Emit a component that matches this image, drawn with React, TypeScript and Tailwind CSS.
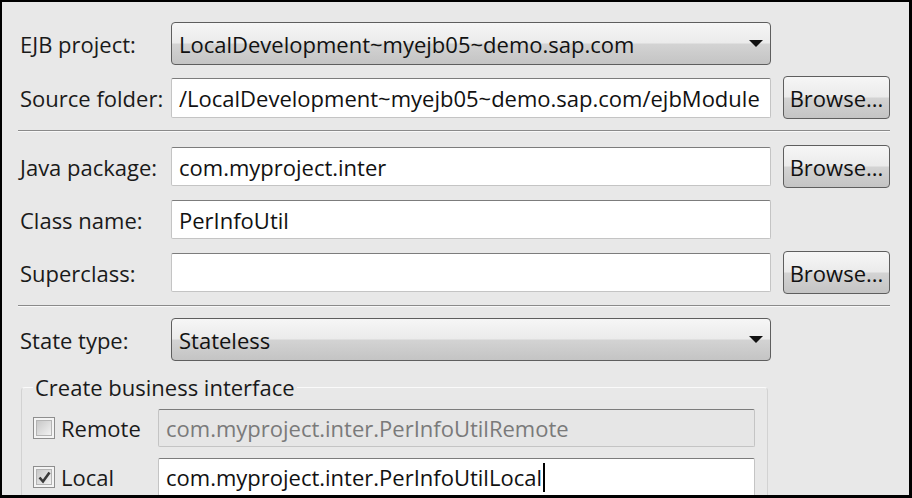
import React from 'react';

const font = "font-['Open_Sans','Liberation_Sans',sans-serif]";

function Combo({ value }: { value: string }) {
  return (
    <div className="flex-1 h-[43px] flex items-center justify-between pl-[7px] pr-[7px] rounded-[4px] border border-[#5e5e5e] bg-[linear-gradient(to_bottom,#f6f6f6_0%,#ebebeb_48%,#d3d3d3_52%,#c4c4c4_100%)] text-[#111]">
      <span>{value}</span>
      <svg width="14" height="7" viewBox="0 0 14 7">
        <path d="M0 0 L14 0 L7 7 Z" fill="#111" />
      </svg>
    </div>
  );
}

function Field({ value, disabled, caret, h = 'h-[39px]' }: { value?: string; disabled?: boolean; caret?: boolean; h?: string }) {
  return (
    <div
      className={`flex-1 ${h} flex items-center pl-[7px] rounded-[2px] border border-[#c4c4c4] border-t-[#7c7c7c] ${
        disabled ? 'bg-[#e6e6e6] text-[#7a7a7a] border-[#9a9a9a]' : 'bg-white text-[#111]'
      }`}
    >
      <span>{value}</span>
      {caret && <span className="ml-[1px] w-[2px] h-[29px] bg-black" />}
    </div>
  );
}

function BrowseButton() {
  return (
    <button
      type="button"
      className="w-[107px] h-[43px] shrink-0 rounded-[4px] border border-[#5e5e5e] bg-[linear-gradient(to_bottom,#f6f6f6_0%,#ebebeb_48%,#d3d3d3_52%,#c4c4c4_100%)] text-[#111]"
    >
      Browse...
    </button>
  );
}

function Row({ label, children, browse }: { label: string; children: React.ReactNode; browse?: boolean }) {
  return (
    <div className="flex items-center h-[43px]">
      <div className="w-[153px] shrink-0 pl-[2px] text-[#1a1a1a]">{label}</div>
      {children}
      <div className="w-[119px] shrink-0 flex justify-end">{browse && <BrowseButton />}</div>
    </div>
  );
}

function Separator() {
  return <div className="h-[2px] border-t border-[#8a8a8a] border-b border-b-[#f8f8f8]" />;
}

function CheckBox({ checked }: { checked?: boolean }) {
  return (
    <div className="w-[22px] h-[22px] border border-[#8e8e8e] bg-[#f4f4f4] p-[2px] shrink-0">
      <div className="w-full h-full border border-[#b4b4b4] bg-[linear-gradient(135deg,#c8c8c8,#f2f2f2)] flex items-center justify-center">
        {checked && (
          <svg width="13" height="13" viewBox="0 0 13 13">
            <path d="M1.5 6.5 L5 10.5 L11.5 1.5" stroke="#3a3a3a" strokeWidth="2.6" fill="none" />
          </svg>
        )}
      </div>
    </div>
  );
}

export default function App() {
  return (
    <div
      className={`w-[912px] h-[498px] overflow-hidden bg-[#e8e8e8] border-t-2 border-l-2 border-r-[3px] border-b-[3px] border-black ${font} text-[22px] leading-[28px]`}
    >
      <div className="pl-[16px] pr-[19px] pt-[20px] flex flex-col">
        <Row label="EJB project:">
          <Combo value="LocalDevelopment~myejb05~demo.sap.com" />
        </Row>
        <div className="mt-[11px]">
          <Row label="Source folder:" browse>
            <Field value="/LocalDevelopment~myejb05~demo.sap.com/ejbModule" h="h-[40px]" />
          </Row>
        </div>
        <div className="mt-[11px]">
          <Separator />
        </div>
        <div className="mt-[13px] flex flex-col gap-[10px]">
          <Row label="Java package:" browse>
            <Field value="com.myproject.inter" />
          </Row>
          <Row label="Class name:">
            <Field value="PerInfoUtil" />
          </Row>
          <Row label="Superclass:" browse>
            <Field />
          </Row>
        </div>
        <div className="mt-[11px]">
          <Separator />
        </div>
        <div className="mt-[11px]">
          <Row label="State type:">
            <Combo value="Stateless" />
          </Row>
        </div>
        <fieldset className="mt-[12px] ml-[3px] w-[747px] rounded-[4px] border border-[#d2d2d2] border-t-[#fafafa] pl-[11px] pr-[12px] pt-[8px] pb-[10px]">
          <legend className="ml-0 px-[2px] text-[#1a1a1a]">Create business interface</legend>
          <div className="flex flex-col gap-[11px]">
            <div className="flex items-center">
              <div className="w-[125px] shrink-0 flex items-center gap-[6px]">
                <CheckBox />
                <span className="text-[#1a1a1a]">Remote</span>
              </div>
              <Field value="com.myproject.inter.PerInfoUtilRemote" disabled h="h-[38px]" />
            </div>
            <div className="flex items-center">
              <div className="w-[125px] shrink-0 flex items-center gap-[6px]">
                <CheckBox checked />
                <span className="text-[#1a1a1a]">Local</span>
              </div>
              <Field value="com.myproject.inter.PerInfoUtilLocal" caret h="h-[38px]" />
            </div>
          </div>
        </fieldset>
      </div>
    </div>
  );
}
